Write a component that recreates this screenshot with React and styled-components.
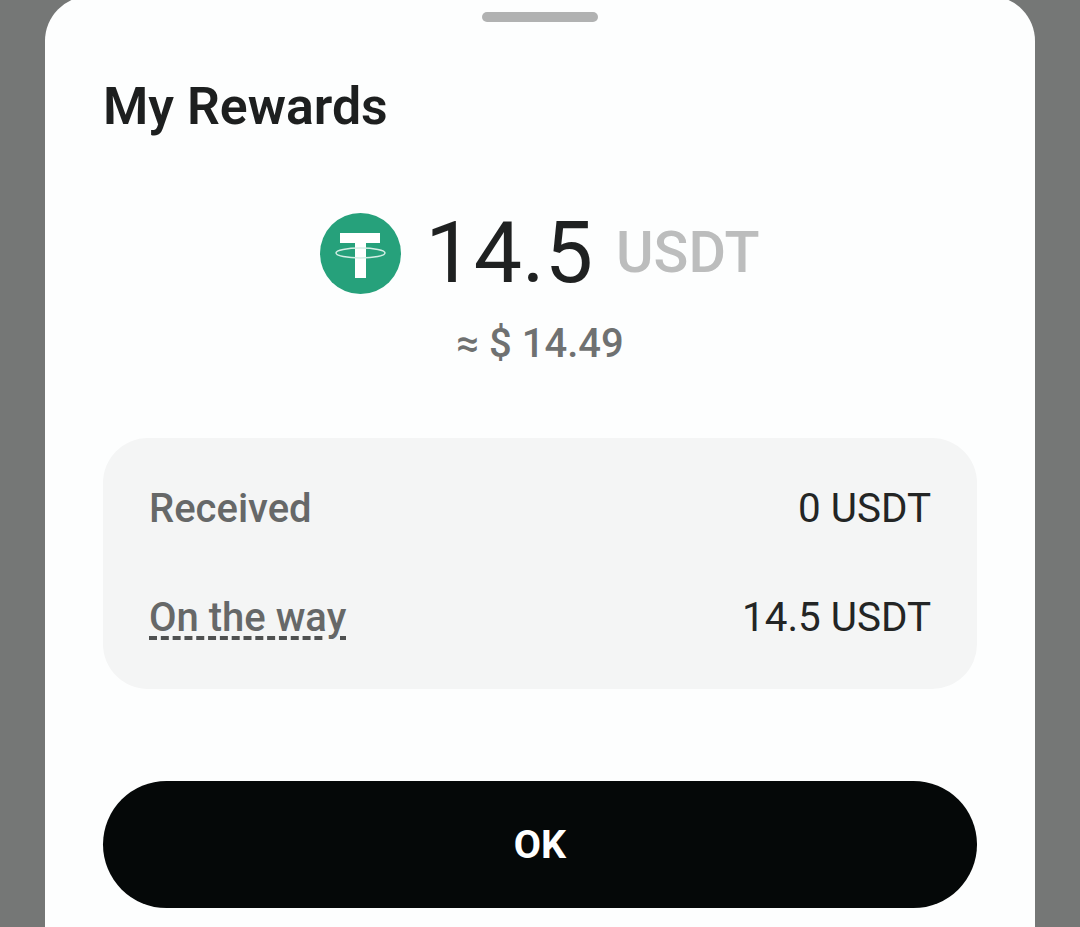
import React from 'react';
import styled, { createGlobalStyle } from 'styled-components';

const GlobalStyle = createGlobalStyle`
  html, body {
    margin: 0;
    padding: 0;
    height: 927px;
    overflow: hidden;
    background: #757776;
    font-family: Roboto, 'Liberation Sans', sans-serif;
  }
`;

const Overlay = styled.div`
  height: 927px;
  padding: 0 45px;
  box-sizing: border-box;
  overflow: hidden;
`;

const Sheet = styled.div`
  margin-top: -4px;
  height: 1000px;
  padding: 16px 58px 0;
  box-sizing: border-box;
  background: #fdfefe;
  border-radius: 45px 45px 0 0;
  display: flex;
  flex-direction: column;
`;

const Handle = styled.div`
  width: 116px;
  height: 10px;
  border-radius: 5px;
  background: #b1b2b2;
  align-self: center;
`;

const Title = styled.h1`
  margin: 53px 0 0;
  font-size: 51.8px;
  line-height: 64px;
  font-weight: 600;
  color: #1d1f1f;
`;

const AmountRow = styled.div`
  margin-top: 64px;
  height: 100px;
  display: flex;
  align-items: center;
  justify-content: center;
`;

const Coin = styled.svg`
  width: 81px;
  height: 81px;
  margin-right: 24px;
  flex-shrink: 0;
`;

const Amount = styled.span`
  font-size: 86px;
  font-weight: 400;
  color: #1f2121;
  line-height: 100px;
`;

const Unit = styled.span`
  margin-left: 23px;
  font-size: 57.5px;
  font-weight: 500;
  color: #bcbdbd;
  line-height: 100px;
`;

const Approx = styled.div`
  margin-top: 16px;
  text-align: center;
  font-size: 40px;
  font-weight: 500;
  line-height: 50px;
  color: #6f7171;
`;

const Card = styled.div`
  margin-top: 69px;
  height: 251px;
  box-sizing: border-box;
  padding: 26px 46px;
  border-radius: 45px;
  background: #f4f5f5;
  display: flex;
  flex-direction: column;
  justify-content: space-between;
`;

const Row = styled.div`
  height: 90px;
  display: flex;
  align-items: center;
  justify-content: space-between;
`;

const Label = styled.span`
  font-size: 40px;
  font-weight: 500;
  line-height: 46px;
  color: #666868;
  ${props => props.$hint && `
    text-decoration: underline dashed #4f5151 4px;
    text-underline-offset: 5px;
  `}
`;

const Value = styled.span`
  font-size: 40.4px;
  font-weight: 400;
  line-height: 46px;
  color: #232525;
`;

const OkButton = styled.button`
  margin-top: 92px;
  height: 127px;
  border: 0;
  border-radius: 64px;
  background: #050808;
  color: #ffffff;
  font-family: inherit;
  font-size: 39.5px;
  font-weight: 700;
`;

const TetherIcon = () => (
  <Coin viewBox="0 0 81 81">
    <circle cx="40.5" cy="40.5" r="40.5" fill="#26a17b" />
    <path d="M20 20h40v10H46v35H35V30H20z" fill="#fff" />
    <ellipse cx="40.500" cy="40" rx="24.500" ry="5" fill="none" stroke="#d4eee5" strokeWidth="1.500" />
  </Coin>
);

const App = () => (
  <>
    <GlobalStyle />
    <Overlay>
      <Sheet>
        <Handle />
        <Title>My Rewards</Title>
        <AmountRow>
          <TetherIcon />
          <Amount>14.5</Amount>
          <Unit>USDT</Unit>
        </AmountRow>
        <Approx>≈ $ 14.49</Approx>
        <Card>
          <Row>
            <Label>Received</Label>
            <Value>0 USDT</Value>
          </Row>
          <Row>
            <Label $hint>On the way</Label>
            <Value>14.5 USDT</Value>
          </Row>
        </Card>
        <OkButton>OK</OkButton>
      </Sheet>
    </Overlay>
  </>
);

export default App;
